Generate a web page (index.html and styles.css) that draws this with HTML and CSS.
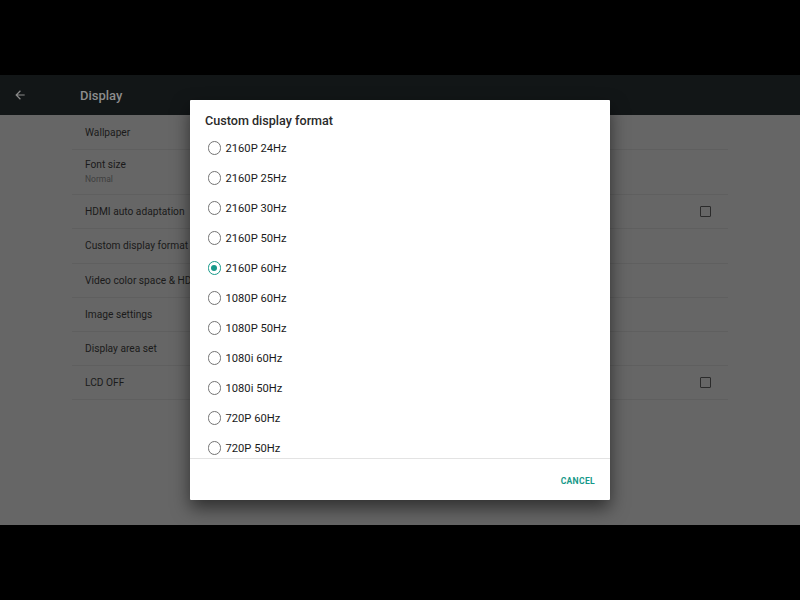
FILE: index.html
```html
<!DOCTYPE html>
<html>
<head>
<meta charset="utf-8">
<link rel="stylesheet" href="styles.css">
</head>
<body>
<div class="frame">
  <div class="bar-top"></div>
  <div class="screen">
    <div class="toolbar">
      <svg class="back" width="14" height="14" viewBox="0 0 24 24"><path d="M20 11H7.83l5.59-5.59L12 4l-8 8 8 8 1.41-1.41L7.83 13H20v-2z" fill="#8a8a8a"/></svg>
      <span class="tb-title">Display</span>
    </div>
    <div class="content">
      <div class="list">
        <div class="row"><span class="label">Wallpaper</span></div>
        <div class="row tall"><div class="two"><span class="label">Font size</span><span class="sub">Normal</span></div></div>
        <div class="row"><span class="label">HDMI auto adaptation</span><span class="check"></span></div>
        <div class="row"><span class="label">Custom display format</span></div>
        <div class="row"><span class="label">Video color space &amp; HDR</span></div>
        <div class="row"><span class="label">Image settings</span></div>
        <div class="row"><span class="label">Display area set</span></div>
        <div class="row"><span class="label">LCD OFF</span><span class="check"></span></div>
      </div>
    </div>
    <div class="dialog">
      <div class="d-title">Custom display format</div>
      <div class="options">
        <div class="opt"><span class="radio"></span>2160P 24Hz</div>
        <div class="opt"><span class="radio"></span>2160P 25Hz</div>
        <div class="opt"><span class="radio"></span>2160P 30Hz</div>
        <div class="opt"><span class="radio"></span>2160P 50Hz</div>
        <div class="opt"><span class="radio on"></span>2160P 60Hz</div>
        <div class="opt"><span class="radio"></span>1080P 60Hz</div>
        <div class="opt"><span class="radio"></span>1080P 50Hz</div>
        <div class="opt"><span class="radio"></span>1080i 60Hz</div>
        <div class="opt"><span class="radio"></span>1080i 50Hz</div>
        <div class="opt"><span class="radio"></span>720P 60Hz</div>
        <div class="opt"><span class="radio"></span>720P 50Hz</div>
      </div>
      <div class="actions"><span class="cancel">CANCEL</span></div>
    </div>
  </div>
  <div class="bar-bottom"></div>
</div>
</body>
</html>
```

FILE: styles.css
```css
* { box-sizing: border-box; }
html, body { margin: 0; padding: 0; background: #000; }
body { font-family: Roboto, "Liberation Sans", sans-serif; }
.frame { width: 800px; height: 600px; display: flex; flex-direction: column; }
.bar-top { height: 75px; background: #000; }
.bar-bottom { height: 75px; background: #000; }
.screen { position: relative; height: 450px; background: #666666; display: flex; flex-direction: column; }
.toolbar { height: 40px; background: #121617; display: flex; align-items: center; padding-left: 13px; }
.back { display: block; }
.tb-title { margin-left: 53px; color: #8c8c8c; font-size: 13px; font-weight: 500; }
.content { flex: 1; padding: 0.5px 72px 0; }
.list { display: flex; flex-direction: column; }
.row { height: 34.2px; border-bottom: 1px solid #5f5f5f; display: flex; align-items: center; justify-content: space-between; padding: 0 17px 0 13px; }
.row.tall { height: 45.5px; }
.two { display: flex; flex-direction: column; }
.label { font-size: 10.2px; color: #1a1a1a; }
.sub { font-size: 8.5px; color: #3e3e3e; margin-top: 4px; }
.check { width: 11px; height: 11px; border: 1.6px solid #2b2b2b; border-radius: 1px; }
.dialog { position: absolute; left: 190px; top: 25px; width: 420px; height: 400px; background: #fff; box-shadow: 0 8px 18px rgba(0,0,0,0.55); border-radius: 1px; display: flex; flex-direction: column; }
.d-title { padding: 13px 0 0 15px; height: 33px; font-size: 12.6px; font-weight: 500; color: #2a2a2a; }
.options { height: 326px; overflow: hidden; border-bottom: 1px solid #e3e3e3; }
.opt { height: 30px; display: flex; align-items: center; padding-left: 17.5px; font-size: 11.2px; color: #1a1a1a; }
.radio { width: 13.5px; height: 13.5px; border: 1.5px solid #737373; border-radius: 50%; margin-right: 4.5px; position: relative; }
.radio.on { border-color: #16998a; }
.radio.on::after { content: ""; position: absolute; left: 2.25px; top: 2.25px; width: 6px; height: 6px; border-radius: 50%; background: #16998a; }
.actions { flex: 1; display: flex; align-items: center; justify-content: flex-end; padding: 2px 15px 0 0; }
.cancel { font-size: 8.6px; font-weight: 700; color: #17998a; letter-spacing: 0.3px; }
```
